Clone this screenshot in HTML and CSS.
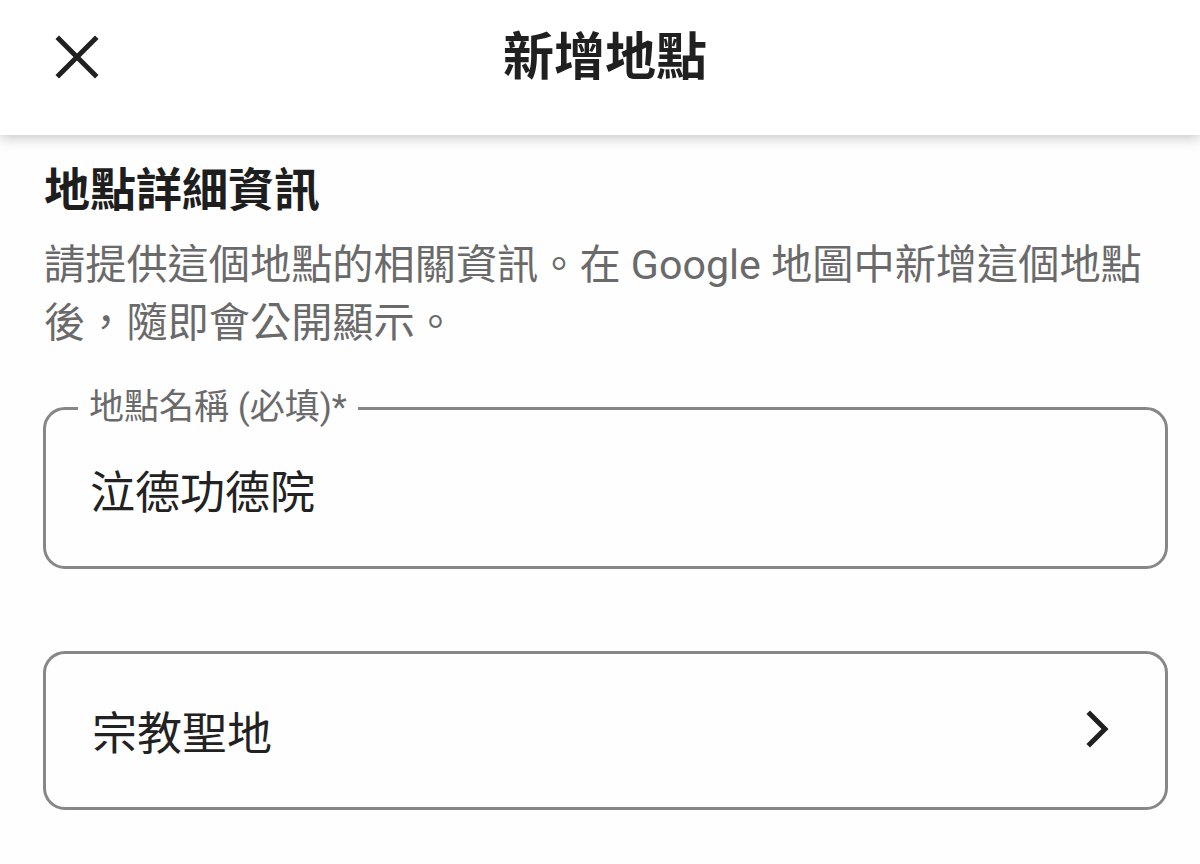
FILE: index.html
```html
<!DOCTYPE html>
<html lang="zh-Hant">
<head>
<meta charset="utf-8">
<title>新增地點</title>
<link rel="stylesheet" href="styles.css">
</head>
<body>
<header class="topbar">
  <button class="close" aria-label="關閉">
    <svg width="44" height="44" viewBox="0 0 44 44"><path d="M4 4 L40 40 M40 4 L4 40" stroke="#202020" stroke-width="5" stroke-linecap="square" fill="none"/></svg>
  </button>
  <h1 class="title">新增地點</h1>
  <span class="spacer"></span>
</header>
<main class="content">
  <h2 class="section-title">地點詳細資訊</h2>
  <p class="desc">請提供這個地點的相關資訊。在 Google 地圖中新增這個地點後，隨即會公開顯示。</p>
  <fieldset class="field">
    <legend class="field-label">地點名稱 (必填)*</legend>
    <div class="field-value">泣德功德院</div>
  </fieldset>
  <div class="field select">
    <div class="field-value">宗教聖地</div>
    <svg class="chevron" width="24" height="38" viewBox="0 0 24 38"><path d="M4 4 L19 19 L4 34" stroke="#202020" stroke-width="5" fill="none" stroke-linecap="square"/></svg>
  </div>
</main>
</body>
</html>
```
FILE: styles.css
```css
* { box-sizing: border-box; }
html, body { margin: 0; padding: 0; background: #fefefe; }
body {
  font-family: "Roboto", "Noto Sans CJK TC", sans-serif;
  color: #202020;
  width: 1200px;
  height: 864px;
  overflow: hidden;
}
.topbar {
  height: 135px;
  background: #ffffff;
  display: grid;
  grid-template-columns: 1fr auto 1fr;
  align-items: center;
  box-shadow: 0 3px 12px rgba(0,0,0,0.22);
  position: relative;
  z-index: 1;
}
.close {
  justify-self: start;
  margin-left: 55px;
  margin-top: -22px;
  background: none;
  border: 0;
  padding: 0;
  width: 44px;
  height: 44px;
  display: flex;
}
.title {
  margin: -28px 0 0 0;
  font-family: "Noto Sans CJK TC", sans-serif;
  font-size: 51px;
  font-weight: 700;
  color: #202020;
  line-height: 1;
  padding-left: 10px;
}
.content {
  padding: 18px 32px 0 44px;
}
.section-title {
  margin: 0;
  font-family: "Noto Sans CJK TC", sans-serif;
  font-size: 46px;
  font-weight: 700;
  line-height: 66px;
  color: #1e1e1e;
}
.desc {
  margin: 17px 0 0 0;
  font-size: 41.2px;
  line-height: 58px;
  color: #6a6a6a;
  font-family: "Roboto", "Noto Sans CJK TC", sans-serif;
}
.field {
  margin: 0 0 0 -1px;
  border: 3px solid #878787;
  border-radius: 22px;
  height: 160px;
  display: flex;
  align-items: center;
  padding: 0 44px;
}
fieldset.field {
  margin-top: 38px;
  display: block;
  padding: 0 44px;
  min-width: 0;
  height: 179px;
}
.field-label {
  font-size: 35px;
  color: #6a6a6a;
  padding: 0 11px;
  margin-left: -12px;
  line-height: 36px;
}
fieldset .field-value {
  padding-top: 34px;
}
.field-value {
  font-family: "Noto Sans CJK TC", sans-serif;
  font-size: 45px;
  line-height: 60px;
  color: #222;
}
.select {
  margin-top: 82px;
  height: 159px;
  justify-content: space-between;
  padding: 0 55px 0 46px;
}
.chevron { display: block; margin-top: -4px; }
```
